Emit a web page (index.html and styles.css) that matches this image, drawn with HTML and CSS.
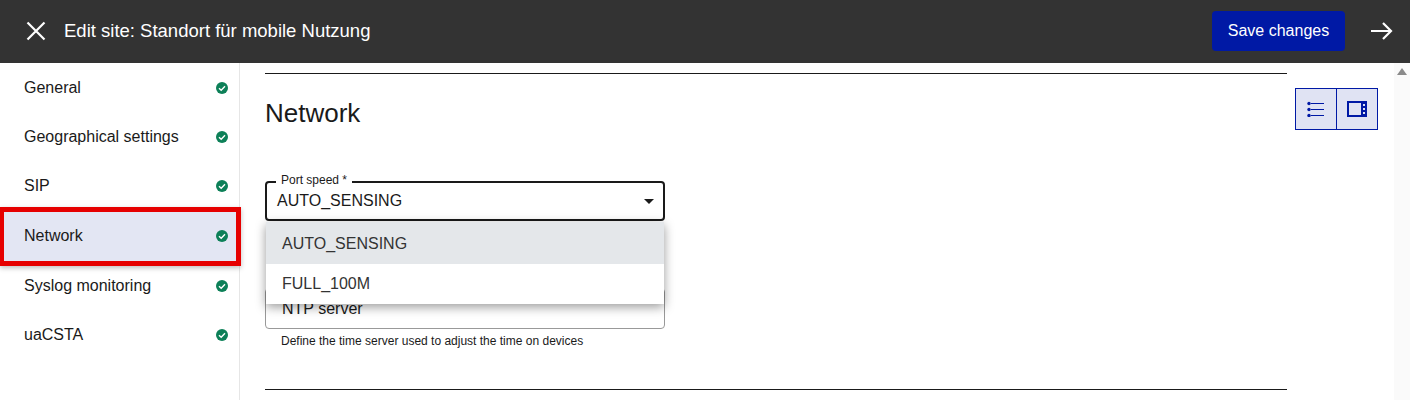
FILE: index.html
```html
<!DOCTYPE html>
<html lang="en">
<head>
  <meta charset="UTF-8">
  <title>Edit site</title>
  <link rel="stylesheet" href="styles.css">
</head>
<body>
  <header class="topbar">
    <button class="icon-btn close-btn" aria-label="Close">
      <svg width="24" height="24" viewBox="0 0 24 24"><path d="M3.5 3.5 L20.5 20.5 M20.5 3.5 L3.5 20.5" stroke="#fff" stroke-width="2.2" fill="none"/></svg>
    </button>
    <div class="topbar-title">Edit site: Standort für mobile Nutzung</div>
    <button class="save-btn">Save changes</button>
    <button class="icon-btn next-btn" aria-label="Next">
      <svg width="24" height="24" viewBox="0 0 24 24"><path d="M2 12 H22 M14 4 L22 12 L14 20" stroke="#fff" stroke-width="2.2" fill="none"/></svg>
    </button>
  </header>

  <div class="layout">
    <nav class="sidebar">
      <a class="nav-item"><span>General</span><svg class="check" viewBox="0 0 12 12"><circle cx="6" cy="6" r="6" fill="#0d8058"/><path d="M3 6.2 L5.2 8.2 L9 4.2" stroke="#fff" stroke-width="1.4" fill="none"/></svg></a>
      <a class="nav-item"><span>Geographical settings</span><svg class="check" viewBox="0 0 12 12"><circle cx="6" cy="6" r="6" fill="#0d8058"/><path d="M3 6.2 L5.2 8.2 L9 4.2" stroke="#fff" stroke-width="1.4" fill="none"/></svg></a>
      <a class="nav-item tall"><span>SIP</span><svg class="check" viewBox="0 0 12 12"><circle cx="6" cy="6" r="6" fill="#0d8058"/><path d="M3 6.2 L5.2 8.2 L9 4.2" stroke="#fff" stroke-width="1.4" fill="none"/></svg></a>
      <a class="nav-item tall active"><span>Network</span><svg class="check" viewBox="0 0 12 12"><circle cx="6" cy="6" r="6" fill="#0d8058"/><path d="M3 6.2 L5.2 8.2 L9 4.2" stroke="#fff" stroke-width="1.4" fill="none"/></svg></a>
      <a class="nav-item"><span>Syslog monitoring</span><svg class="check" viewBox="0 0 12 12"><circle cx="6" cy="6" r="6" fill="#0d8058"/><path d="M3 6.2 L5.2 8.2 L9 4.2" stroke="#fff" stroke-width="1.4" fill="none"/></svg></a>
      <a class="nav-item"><span>uaCSTA</span><svg class="check" viewBox="0 0 12 12"><circle cx="6" cy="6" r="6" fill="#0d8058"/><path d="M3 6.2 L5.2 8.2 L9 4.2" stroke="#fff" stroke-width="1.4" fill="none"/></svg></a>
    </nav>

    <main class="content">
      <div class="section">
        <div class="section-head">
          <h2>Network</h2>
          <div class="view-toggle">
            <button aria-label="List view">
              <svg width="18" height="16" viewBox="0 0 18 16"><g fill="#0019a5"><circle cx="2" cy="2.5" r="1.7"/><circle cx="2" cy="8.5" r="1.7"/><circle cx="2" cy="14.5" r="1.7"/><rect x="4" y="2" width="13" height="1"/><rect x="4" y="8" width="13" height="1"/><rect x="4" y="14" width="13" height="1"/></g></svg>
            </button>
            <button aria-label="Panel view">
              <svg width="20" height="16" viewBox="0 0 20 16"><path d="M1 1 H19 V15 H1 Z" fill="none" stroke="#0019a5" stroke-width="2"/><rect x="14" y="1" width="5" height="14" fill="#0019a5"/><rect x="16" y="3" width="2" height="2" fill="#e0e3f3"/><rect x="16" y="7" width="2" height="2" fill="#e0e3f3"/><rect x="16" y="11" width="2" height="2" fill="#e0e3f3"/></svg>
            </button>
          </div>
        </div>

        <div class="field select-field">
          <span class="field-label">Port speed *</span>
          <span class="field-value">AUTO_SENSING</span>
          <span class="caret"></span>
          <ul class="menu">
            <li class="selected">AUTO_SENSING</li>
            <li>FULL_100M</li>
          </ul>
        </div>

        <div class="field text-field">NTP server</div>
        <p class="hint">Define the time server used to adjust the time on devices</p>
      </div>
    </main>

    <div class="scrollbar"><span class="scroll-up"></span></div>
  </div>
</body>
</html>
```

FILE: styles.css
```css
html, body {
  height: 400px;
  overflow: hidden;
}

body {
  margin: 0;
  background-color: #fff;
  color: #1a1a1a;
  font-family: "Liberation Sans", Arial, sans-serif;
  font-size: 16px;
}

.topbar {
  box-sizing: border-box;
  display: flex;
  align-items: center;
  height: 63px;
  padding-bottom: 2px;
  background-color: #333;
  color: #fff;
}

.icon-btn {
  display: flex;
  padding: 0;
  border: none;
  background: none;
}

.close-btn {
  margin-left: 24px;
}

.topbar-title {
  flex: 1;
  margin-left: 16px;
  font-size: 18.5px;
}

.save-btn {
  width: 133px;
  height: 40px;
  border: none;
  border-radius: 4px;
  background-color: #0019a5;
  color: #fff;
  font-family: inherit;
  font-size: 16px;
}

.next-btn {
  margin-left: 24px;
  margin-right: 17px;
}

.layout {
  display: flex;
  height: 337px;
}

.sidebar {
  width: 239px;
  flex-shrink: 0;
  border-right: 1px solid #e6e6e6;
}

.nav-item {
  display: flex;
  justify-content: space-between;
  align-items: center;
  height: 49px;
  padding: 0 11px 0 24px;
}

.nav-item.tall {
  height: 50px;
}

.active {
  position: relative;
  background-color: #e3e6f3;
}

/* red highlight frame sits over the row */
.active::after {
  content: "";
  position: absolute;
  top: -4px;
  bottom: -5px;
  left: 0;
  right: -2px;
  border: 5px solid #e60000;
  border-left-width: 4px;
  box-shadow: 0 2px 5px rgba(0, 0, 0, 0.25);
}

.check {
  width: 12px;
  height: 12px;
}

.content {
  flex: 1;
  padding: 10px 0 0 25px;
}

.section {
  width: 1022px;
  height: 315px;
  border-top: 1px solid #1a1a1a;
  border-bottom: 1px solid #1a1a1a;
}

.section-head {
  display: flex;
  justify-content: space-between;
  padding-top: 14px;
  margin-right: -91px;
}

h2 {
  margin: 10px 0 0;
  font-size: 26px;
  font-weight: 400;
}

.view-toggle {
  display: flex;
  height: 42px;
}

.view-toggle button {
  display: flex;
  align-items: center;
  justify-content: center;
  width: 42px;
  padding: 0;
  border: 1px solid #0019a5;
  background-color: #e0e3f3;
}

.view-toggle button + button {
  margin-left: -1px;
}

.field {
  position: relative;
  box-sizing: border-box;
  width: 400px;
  border-radius: 4px;
}

.select-field {
  height: 40px;
  margin-top: 51px;
  border: 2px solid #1a1a1a;
}

.field-label {
  position: absolute;
  top: -10px;
  left: 9px;
  padding: 0 5px;
  background-color: #fff;
  font-size: 12px;
}

.field-value {
  display: block;
  padding: 9px 0 0 10px;
}

.caret {
  position: absolute;
  top: 16px;
  right: 9px;
  border-left: 5px solid transparent;
  border-right: 5px solid transparent;
  border-top: 5px solid #1a1a1a;
}

.menu {
  position: absolute;
  z-index: 2;
  top: 39px;
  left: -1px;
  width: 398px;
  margin: 0;
  padding: 0;
  list-style: none;
  background-color: #fff;
  box-shadow: 0 3px 10px rgba(0, 0, 0, 0.4);
}

.menu li {
  height: 40px;
  padding-left: 16px;
  line-height: 39px;
  color: #333;
}

.menu li.selected {
  height: 42px;
  line-height: 44px;
  background-color: #e4e7ea;
}

.text-field {
  height: 41px;
  margin-top: 67px;
  padding: 11px 16px;
  border: 1px solid #999;
}

.hint {
  margin: 5px 0 0 16px;
  font-size: 12px;
}

.scrollbar {
  width: 16px;
  margin-left: auto;
  background-color: #fafafa;
}

.scroll-up {
  display: block;
  width: 0;
  margin: 5px auto 0;
  border-left: 5px solid transparent;
  border-right: 5px solid transparent;
  border-bottom: 7px solid #8a8a8a;
}
```
